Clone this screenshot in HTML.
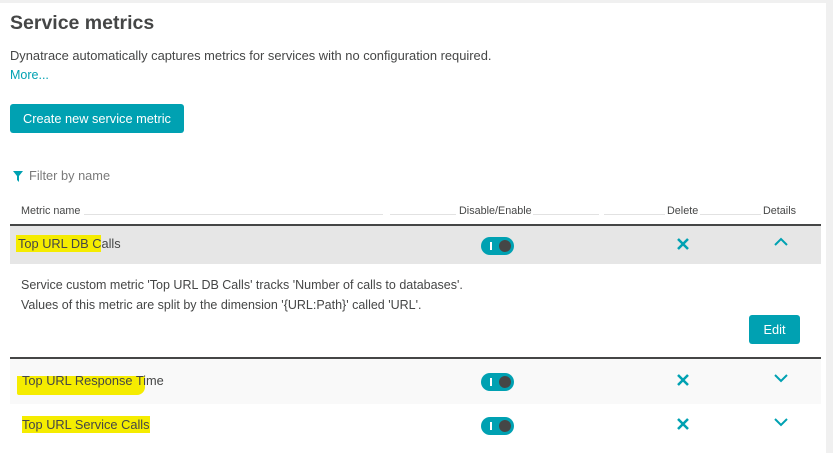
<!DOCTYPE html>
<html><head><style>
body{margin:0;width:833px;height:453px;background:#fff;font-family:"Liberation Sans",sans-serif;color:#454646;position:relative;overflow:hidden}
.a{position:absolute;white-space:nowrap}
.hl{background:#f5ec00;}
.tog{position:absolute;width:33px;height:18px;border-radius:9px;background:#00a1b2}
.tog:before{content:"";position:absolute;left:9px;top:5px;width:1.5px;height:8px;background:#fff}
.tog:after{content:"";position:absolute;right:3px;top:3px;width:12px;height:12px;border-radius:6px;background:#454646}
.hline{position:absolute;height:1px;background:#e2e2e2;top:214px}
</style></head><body>
<div class="a" style="left:0;top:0;width:833px;height:3px;background:#f0f0f0"></div>
<div class="a" style="left:826px;top:0;width:7px;height:453px;background:#f0f0f0"></div>
<div class="a" style="left:10px;top:12px;font-size:19.5px;font-weight:bold">Service metrics</div>
<div class="a" style="left:10px;top:48px;font-size:12.9px">Dynatrace automatically captures metrics for services with no configuration required.</div>
<div class="a" style="left:10px;top:68px;font-size:12.5px;color:#00a1b2">More...</div>
<div class="a" style="left:10px;top:104px;width:174px;height:29px;background:#00a1b2;border-radius:3px;color:#fff;font-size:12.8px;line-height:29px;text-align:center">Create new service metric</div>
<svg class="a" style="left:13px;top:171px" width="10" height="11"><path d="M0 0H10L6 5V11L4 9V5Z" fill="#00a1b2"/></svg>
<div class="a" style="left:29px;top:168px;font-size:12.8px;color:#7a7a7a">Filter by name</div>
<div class="a" style="left:21px;top:205px;font-size:10.8px">Metric name</div>
<div class="hline" style="left:84px;width:299px"></div>
<div class="hline" style="left:390px;width:66px"></div>
<div class="a" style="left:459px;top:205px;font-size:10.8px">Disable/Enable</div>
<div class="hline" style="left:533px;width:66px"></div>
<div class="hline" style="left:604px;width:61px"></div>
<div class="a" style="left:667px;top:205px;font-size:10.8px">Delete</div>
<div class="hline" style="left:700px;width:61px"></div>
<div class="a" style="left:763px;top:205px;font-size:10.8px">Details</div>
<div class="a" style="left:10px;top:224px;width:811px;height:2px;background:#454646"></div>
<div class="a" style="left:10px;top:226px;width:811px;height:38px;background:#e6e6e6"></div>
<div class="a" style="left:16px;top:236px;font-size:12.8px"><span class="hl" style="padding:1px 0 1px 2px">Top URL DB C</span>alls</div>
<div class="tog" style="left:481px;top:237px"></div>
<svg class="a" style="left:677px;top:238px" width="12" height="12"><path d="M1 1L11 11M11 1L1 11" stroke="#00a1b2" stroke-width="2.5"/></svg>
<svg class="a" style="left:774px;top:237px" width="14" height="9"><path d="M1 8L7 2L13 8" stroke="#00a1b2" stroke-width="2" fill="none"/></svg>
<div class="a" style="left:21px;top:278px;font-size:12.5px">Service custom metric 'Top URL DB Calls' tracks 'Number of calls to databases'.</div>
<div class="a" style="left:21px;top:298px;font-size:12.5px">Values of this metric are split by the dimension '{URL:Path}' called 'URL'.</div>
<div class="a" style="left:749px;top:315px;width:51px;height:29px;background:#00a1b2;border-radius:3px;color:#fff;font-size:12.8px;line-height:29px;text-align:center">Edit</div>
<div class="a" style="left:10px;top:357px;width:811px;height:2px;background:#454646"></div>
<div class="a" style="left:10px;top:359px;width:811px;height:45px;background:#f9f9f9"></div>
<div class="a" style="left:17px;top:376px;width:128px;height:19px;background:#f5ec00;border-radius:0 2px 8px 2px"></div>
<div class="a" style="left:22px;top:373px;font-size:12.8px">Top URL Response Time</div>
<div class="tog" style="left:481px;top:373px"></div>
<svg class="a" style="left:677px;top:374px" width="12" height="12"><path d="M1 1L11 11M11 1L1 11" stroke="#00a1b2" stroke-width="2.5"/></svg>
<svg class="a" style="left:774px;top:374px" width="14" height="9"><path d="M1 1L7 7L13 1" stroke="#00a1b2" stroke-width="2" fill="none"/></svg>
<div class="a" style="left:22px;top:417px;font-size:12.8px"><span class="hl" style="padding:1px 0">Top URL Service Calls</span></div>
<div class="tog" style="left:481px;top:417px"></div>
<svg class="a" style="left:677px;top:418px" width="12" height="12"><path d="M1 1L11 11M11 1L1 11" stroke="#00a1b2" stroke-width="2.5"/></svg>
<svg class="a" style="left:774px;top:418px" width="14" height="9"><path d="M1 1L7 7L13 1" stroke="#00a1b2" stroke-width="2" fill="none"/></svg>
</body></html>
